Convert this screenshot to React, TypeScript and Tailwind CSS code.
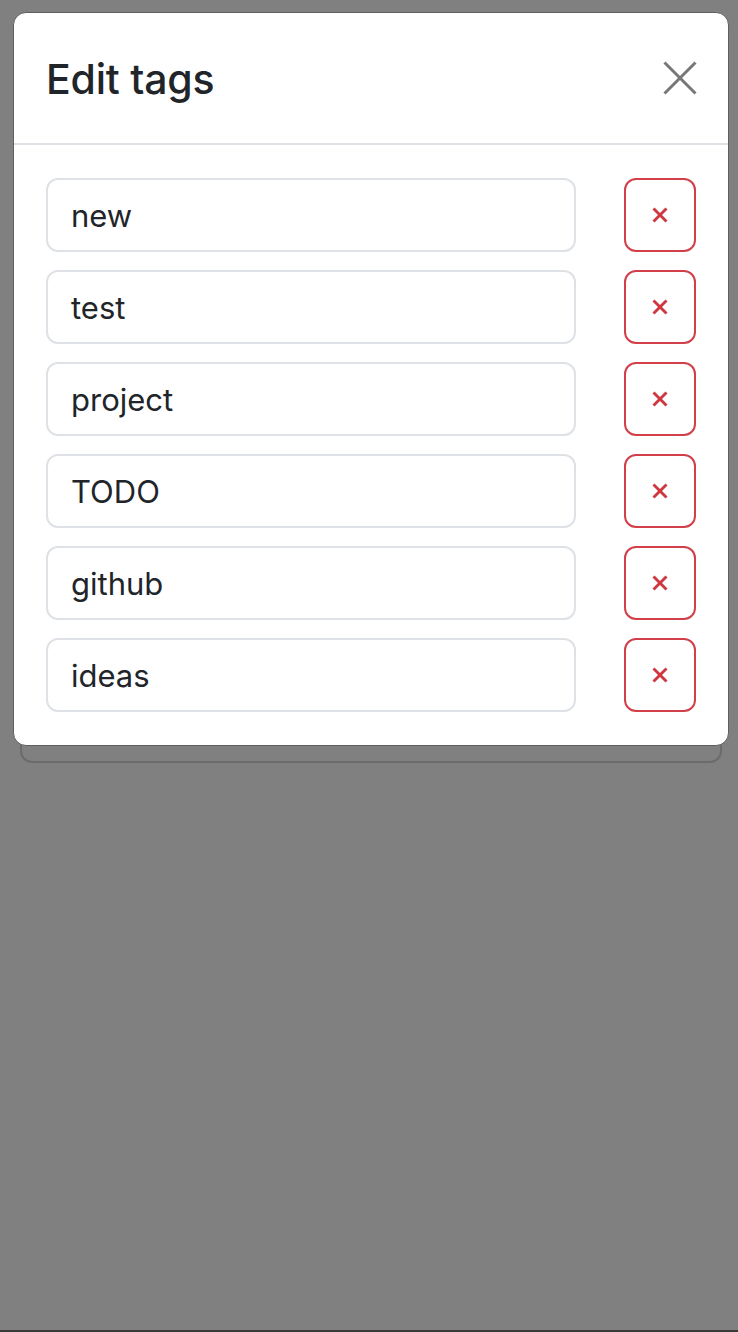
import React from "react";

const tags = ["new", "test", "project", "TODO", "github", "ideas"];

function XIcon({ size, stroke, width }: { size: number; stroke: string; width: number }) {
  return (
    <svg width={size} height={size} viewBox={`0 0 ${size} ${size}`} fill="none">
      <line x1={1.5} y1={1.5} x2={size - 1.5} y2={size - 1.5} stroke={stroke} strokeWidth={width} strokeLinecap="butt" />
      <line x1={size - 1.5} y1={1.5} x2={1.5} y2={size - 1.5} stroke={stroke} strokeWidth={width} strokeLinecap="butt" />
    </svg>
  );
}

export default function App() {
  return (
    <div
      className="relative h-[1332px] w-[738px] bg-[#808080] flex flex-col overflow-hidden"
      style={{ fontFamily: "Inter, 'Liberation Sans', Arial, sans-serif" }}
    >
      <div className="flex-1">
        <div className="ml-[20px] mt-[30px] w-[702px] h-[733px] rounded-[12px] border-2 border-[#6b6b6b]" />
      </div>
      <div className="h-[2px] bg-[#3a3a3a]" />

      <div className="absolute left-[13px] top-[12px] w-[716px] rounded-[13px] border border-[#5f5f5f] bg-white overflow-hidden">
        <div className="h-[132px] pl-[32px] pr-[31px] flex items-center justify-between border-b-2 border-[#dee2e6]">
          <h5 className="text-[41px] font-medium text-[#212529] leading-none tracking-[-0.2px] mt-[2px]">Edit tags</h5>
          <button className="w-[34px] h-[34px] flex items-center justify-center">
            <XIcon size={34} stroke="#787878" width={3} />
          </button>
        </div>
        <div className="pl-[32px] pr-[32px] pt-[33px] pb-[33px] flex flex-col gap-[18px]">
          {tags.map((t) => (
            <div key={t} className="flex items-center justify-between">
              <div className="w-[530px] h-[74px] rounded-[12px] border-2 border-[#dee2e6] flex items-center pl-[23px] pt-[3px] text-[31px] text-[#212529]">
                {t}
              </div>
              <button className="w-[72px] h-[74px] rounded-[12px] border-2 border-[#d23f48] flex items-center justify-center">
                <XIcon size={16} stroke="#d0363f" width={2.8} />
              </button>
            </div>
          ))}
        </div>
      </div>
    </div>
  );
}
